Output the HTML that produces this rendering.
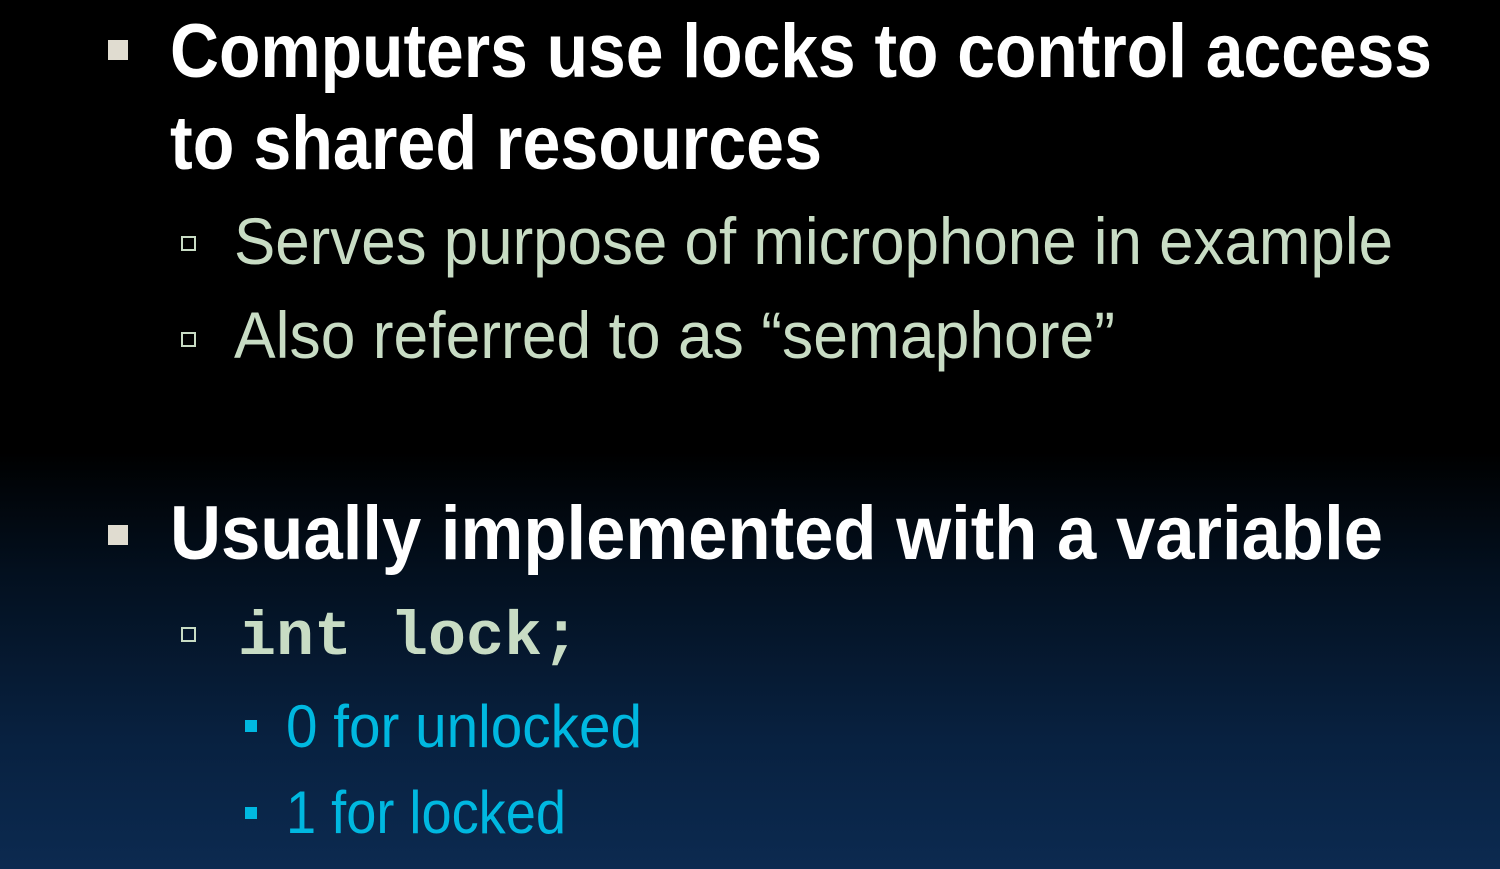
<!DOCTYPE html>
<html><head><meta charset="utf-8"><style>
html,body{margin:0;padding:0}
body{width:1500px;height:869px;overflow:hidden;position:relative;
background:linear-gradient(to bottom,#000 0%,#000 52%,#03101f 66%,#082140 85%,#0c2a50 100%);
font-family:"Liberation Sans",sans-serif}
.t{position:absolute;white-space:nowrap;transform-origin:0 0;line-height:1}
.w{color:#fff;font-weight:bold;font-size:76px}
.g{color:#c8dcc4;font-size:66px}
.c{color:#00b8e0;font-size:60px}
.m{color:#c8dcc4;font-family:"Liberation Mono",monospace;font-weight:bold;font-size:62px}
.b{position:absolute}
.fs{background:#e0dcd0;width:20px;height:20px}
.hs{border:2px solid #c8dcc4;width:11px;height:11px}
.cs{background:#00b8e0;width:12px;height:12px}
</style></head><body>
<div class="b fs" style="left:108px;top:40px"></div>
<div class="t w" data-w="1262" style="left:170px;top:14px">Computers use locks to control access</div>
<div class="t w" data-w="652" style="left:170px;top:106px">to shared resources</div>
<div class="b hs" style="left:181px;top:236px"></div>
<div class="t g" data-w="1159" style="left:234px;top:208px">Serves purpose of microphone in example</div>
<div class="b hs" style="left:181px;top:332px"></div>
<div class="t g" data-w="881" style="left:234px;top:302px">Also referred to as “semaphore”</div>
<div class="b fs" style="left:108px;top:525px"></div>
<div class="t w" data-w="1213" style="left:170px;top:496px">Usually implemented with a variable</div>
<div class="b hs" style="left:181px;top:627px"></div>
<div class="t m" data-w="342" style="left:238px;top:607px">int lock;</div>
<div class="b cs" style="left:245px;top:720px"></div>
<div class="t c" data-w="356" style="left:286px;top:697px">0 for unlocked</div>
<div class="b cs" style="left:245px;top:807px"></div>
<div class="t c" data-w="280" style="left:286px;top:783px">1 for locked</div>
<script>
document.querySelectorAll('.t').forEach(function(e){
var w=+e.getAttribute('data-w');var r=e.getBoundingClientRect().width;
if(r>0)e.style.transform='scaleX('+(w/r)+')';});
</script>
</body></html>
